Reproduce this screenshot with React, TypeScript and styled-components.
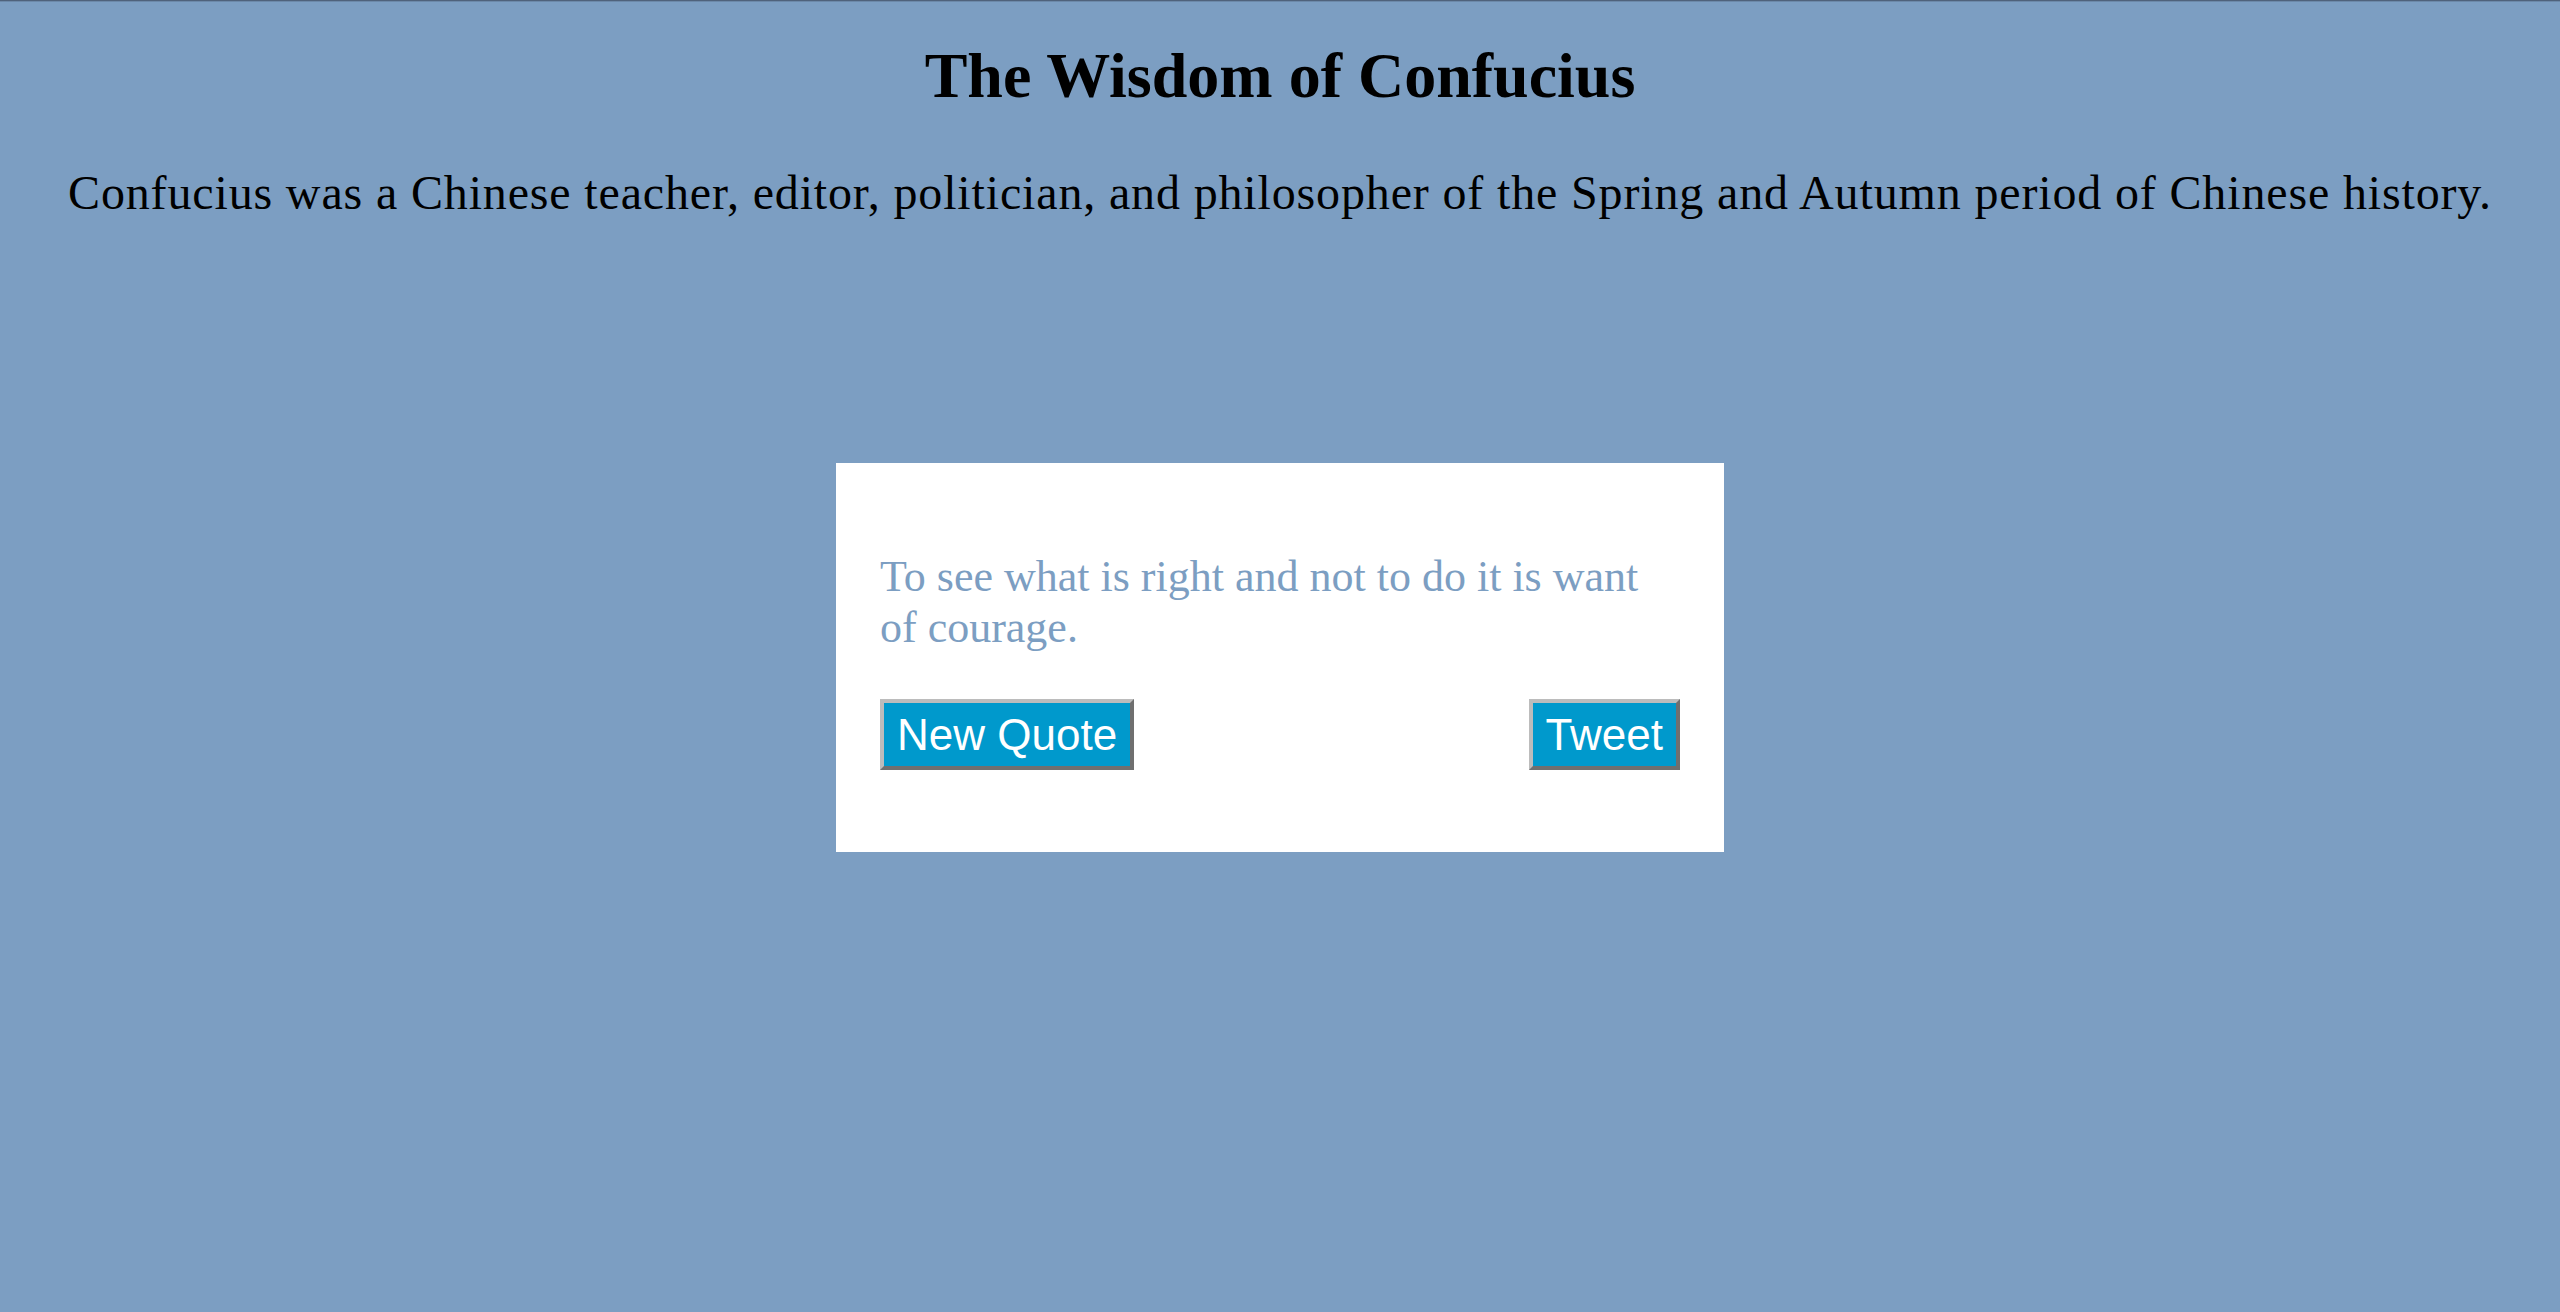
import React from "react";
import styled, { createGlobalStyle } from "styled-components";

const GlobalStyle = createGlobalStyle`
  html, body {
    margin: 0;
    padding: 0;
    background: #7c9ec2;
  }
  body {
    box-shadow: inset 0 1px 0 #4f627b, inset 0 2px 0 rgba(79, 98, 123, 0.35);
    min-height: 100vh;
    font-family: "Liberation Serif", "Times New Roman", serif;
    color: #000;
  }
`;

const Page = styled.main`
  display: flex;
  flex-direction: column;
  align-items: center;
  padding: 0 8px;
`;

const Title = styled.h1`
  margin: 39px 0 0;
  font-size: 64px;
  font-weight: bold;
  text-align: center;
`;

const Intro = styled.p`
  margin: 52px 0 0;
  font-size: 48px;
  letter-spacing: 0.85px;
  text-align: center;
`;

const Card = styled.section`
  width: 888px;
  box-sizing: border-box;
  margin-top: 243px;
  padding: 44px 44px 82px;
  background: #ffffff;
`;

const Quote = styled.p`
  margin: 44px 0 46px;
  font-size: 44px;
  color: #7c9ec2;
`;

const ButtonRow = styled.div`
  display: flex;
  justify-content: space-between;
  align-items: center;
`;

const ActionButton = styled.button`
  height: 71px;
  box-sizing: border-box;
  padding: 0 13px;
  background: #0099cc;
  color: #ffffff;
  font-family: "Liberation Sans", Arial, Helvetica, sans-serif;
  font-size: 44px;
  line-height: 1;
  border-width: 4px;
  border-style: solid;
  border-color: #bcbcbc #6f6f6f #6f6f6f #bcbcbc;
  cursor: pointer;
`;

export default function App() {
  return (
    <>
      <GlobalStyle />
      <Page>
        <Title>The Wisdom of Confucius</Title>
        <Intro>
          Confucius was a Chinese teacher, editor, politician, and philosopher of the Spring and
          Autumn period of Chinese history.
        </Intro>
        <Card>
          <Quote>To see what is right and not to do it is want of courage.</Quote>
          <ButtonRow>
            <ActionButton>New Quote</ActionButton>
            <ActionButton>Tweet</ActionButton>
          </ButtonRow>
        </Card>
      </Page>
    </>
  );
}
